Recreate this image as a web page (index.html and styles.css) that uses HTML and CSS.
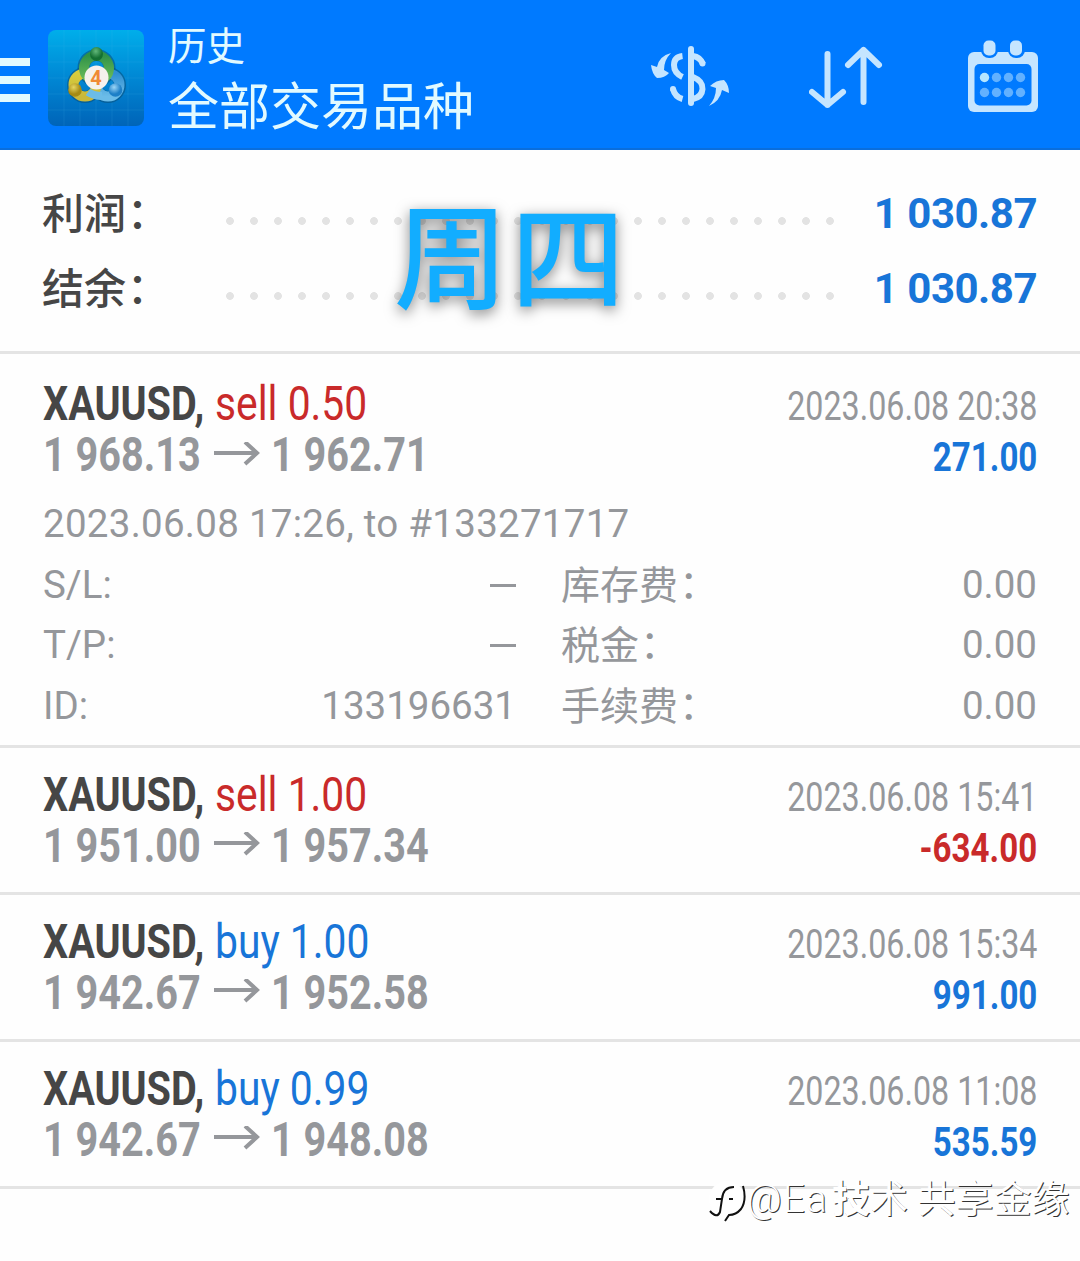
FILE: index.html
```html
<!DOCTYPE html>
<html lang="zh-CN">
<head>
<meta charset="UTF-8">
<meta name="viewport" content="width=device-width, initial-scale=1.0">
<title>历史</title>
<link rel="stylesheet" href="styles.css">
</head>
<body>

<div class="header">
    <div class="menu"><i></i><i></i><i></i></div>
    <svg class="logo" width="96" height="96" viewBox="0 0 96 96">
        <defs>
            <linearGradient id="bg" x1="0" y1="0" x2="0" y2="1"><stop offset="0" stop-color="#00aeea"/><stop offset=".5" stop-color="#0087d4"/><stop offset="1" stop-color="#0064b8"/></linearGradient>
            <linearGradient id="green" x1="0" y1="0" x2="0" y2="1"><stop offset="0" stop-color="#2f9248"/><stop offset="1" stop-color="#6dbd5a"/></linearGradient>
            <linearGradient id="gold" x1="0" y1="0" x2="0" y2="1"><stop offset="0" stop-color="#d6cc3c"/><stop offset="1" stop-color="#c9b83a"/></linearGradient>
            <linearGradient id="blue" x1="0" y1="0" x2="0" y2="1"><stop offset="0" stop-color="#2f8fd2"/><stop offset="1" stop-color="#6bbce8"/></linearGradient>
            <radialGradient id="gball" cx=".45" cy=".3"><stop offset="0" stop-color="#62b87a"/><stop offset="1" stop-color="#147032"/></radialGradient>
            <radialGradient id="yball" cx=".4" cy=".3"><stop offset="0" stop-color="#e6d660"/><stop offset="1" stop-color="#a58a14"/></radialGradient>
            <radialGradient id="bball" cx=".4" cy=".3"><stop offset="0" stop-color="#9cd6f6"/><stop offset="1" stop-color="#1d7fc7"/></radialGradient>
        </defs>
        <rect width="96" height="96" rx="8" fill="url(#bg)"/>
        <path d="M0 16H96M0 32H96M0 48H96M0 64H96M0 80H96M16 0V96M32 0V96M48 0V96M64 0V96M80 0V96" stroke="#4cc0ef" stroke-opacity=".13" fill="none"/>
        <g fill="none" stroke="#0a4f78" stroke-opacity=".55" stroke-width="12">
            <circle cx="48.500" cy="38" r="13"/>
            <circle cx="37" cy="55" r="12"/>
            <circle cx="60" cy="55" r="12"/>
        </g>
        <g fill="none" stroke-width="10">
            <circle cx="60" cy="55" r="11.500" stroke="url(#blue)"/>
            <circle cx="37" cy="55" r="11.500" stroke="url(#gold)"/>
            <circle cx="48.500" cy="38" r="12.500" stroke="url(#green)"/>
            <path d="M40 62Q46 66 54 66" stroke="#6bbce8" stroke-width="8"/>
        </g>
        <ellipse cx="48.500" cy="24" rx="6.500" ry="7" fill="url(#gball)"/>
        <circle cx="27" cy="60" r="6.800" fill="url(#yball)"/>
        <circle cx="67.500" cy="60" r="6.800" fill="url(#bball)"/>
        <circle cx="48.500" cy="47.500" r="12" fill="#f5f1ed"/>
        <text x="48" y="55" class="logo-num">4</text>
    </svg>
    <div class="titles">
        <div class="title">历史</div>
        <div class="subtitle">全部交易品种</div>
    </div>
    <svg class="icon-money" width="80" height="64" viewBox="0 0 80 64">
        <g fill="none" stroke="#c5e5ff" stroke-width="6">
            <path d="M40 6V60" stroke-linecap="round"/>
            <path d="M31.500 13Q23 14 23 22Q23 30 31.500 34"/>
            <path d="M42 13Q49 14 52 21M22 46Q24 54 31.500 56"/>
            <path d="M42 34Q52 38 51.500 46Q51 54 42 56"/>
        </g>
        <g fill="#c5e5ff">
            <circle cx="51.500" cy="20.500" r="3"/><circle cx="22" cy="46" r="3"/>
            <path d="M20 10Q8 13 6 24L0 22Q1 31 6 35Q14 35 18 30L13 27Q13 17 20 10Z"/>
            <path d="M58 63Q69 58 71 47L78 50Q78 42 73 37Q65 37 59 43L65 45Q65 55 58 63Z"/>
        </g>
    </svg>
    <svg class="icon-sort" width="74" height="66" viewBox="0 0 74 66">
        <path d="M18.500 9V60M3 47L18.500 60L34 47M54.500 57V5M39 20L54.500 5L70 20" fill="none" stroke="#c5e5ff" stroke-width="6" stroke-linecap="round" stroke-linejoin="round"/>
    </svg>
    <svg class="icon-cal" width="70" height="74" viewBox="0 0 70 74">
        <rect x="0" y="13" width="70" height="60" rx="6" fill="#c5e5ff"/>
        <rect x="6.500" y="25" width="57" height="41.500" rx="5" fill="#007aff"/>
        <rect x="13" y="-1" width="17" height="20" rx="8" fill="#007aff"/>
        <rect x="40" y="-1" width="17" height="20" rx="8" fill="#007aff"/>
        <rect x="15.500" y="1.500" width="12" height="15" rx="5" fill="#c5e5ff"/>
        <rect x="42" y="1.500" width="12" height="15" rx="5" fill="#c5e5ff"/>
        <circle cx="16.500" cy="38.500" r="4.700" fill="#b5e6ff"/>
        <g fill="#62b1ff">
            <circle cx="28.500" cy="38.500" r="4.700"/><circle cx="40.500" cy="38.500" r="4.700"/><circle cx="52.500" cy="38.500" r="4.700"/>
            <circle cx="16.500" cy="53.500" r="4.700"/><circle cx="28.500" cy="53.500" r="4.700"/><circle cx="40.500" cy="53.500" r="4.700"/><circle cx="52.500" cy="53.500" r="4.700"/>
        </g>
    </svg>
</div>

<div class="summary">
    <div class="sum-row"><span class="sum-label">利润<i>：</i></span><span class="dots"></span><span class="sum-value">1 030.87</span></div>
    <div class="sum-row"><span class="sum-label">结余<i>：</i></span><span class="dots"></span><span class="sum-value">1 030.87</span></div>
    <div class="day">周四</div>
</div>

<div class="deal open">
    <div class="line">
        <div class="name"><b>XAUUSD,</b><span class="sell">sell 0.50</span></div>
        <div class="date">2023.06.08 20:38</div>
    </div>
    <div class="line">
        <div class="price"><span>1 968.13</span><svg width="46" height="26" viewBox="0 0 46 26"><path d="M0 11H43M31 0L43 11L31 22" fill="none" stroke="#95979b" stroke-width="4"/></svg><span>1 962.71</span></div>
        <div class="profit">271.00</div>
    </div>
    <div class="details">
        <div class="order">2023.06.08 17:26, to #133271717</div>
        <div class="cell"><span>S/L:</span><i class="dash"></i></div>
        <div class="cell"><span class="fee">库存费<i>：</i></span><span>0.00</span></div>
        <div class="cell"><span>T/P:</span><i class="dash"></i></div>
        <div class="cell"><span class="fee">税金<i>：</i></span><span>0.00</span></div>
        <div class="cell"><span>ID:</span><span>133196631</span></div>
        <div class="cell"><span class="fee">手续费<i>：</i></span><span>0.00</span></div>
    </div>
</div>

<div class="deal">
    <div class="line">
        <div class="name"><b>XAUUSD,</b><span class="sell">sell 1.00</span></div>
        <div class="date">2023.06.08 15:41</div>
    </div>
    <div class="line">
        <div class="price"><span>1 951.00</span><svg width="46" height="26" viewBox="0 0 46 26"><path d="M0 11H43M31 0L43 11L31 22" fill="none" stroke="#95979b" stroke-width="4"/></svg><span>1 957.34</span></div>
        <div class="profit loss">-634.00</div>
    </div>
</div>

<div class="deal">
    <div class="line">
        <div class="name"><b>XAUUSD,</b><span class="buy">buy 1.00</span></div>
        <div class="date">2023.06.08 15:34</div>
    </div>
    <div class="line">
        <div class="price"><span>1 942.67</span><svg width="46" height="26" viewBox="0 0 46 26"><path d="M0 11H43M31 0L43 11L31 22" fill="none" stroke="#95979b" stroke-width="4"/></svg><span>1 952.58</span></div>
        <div class="profit">991.00</div>
    </div>
</div>

<div class="deal">
    <div class="line">
        <div class="name"><b>XAUUSD,</b><span class="buy">buy 0.99</span></div>
        <div class="date">2023.06.08 11:08</div>
    </div>
    <div class="line">
        <div class="price"><span>1 942.67</span><svg width="46" height="26" viewBox="0 0 46 26"><path d="M0 11H43M31 0L43 11L31 22" fill="none" stroke="#95979b" stroke-width="4"/></svg><span>1 948.08</span></div>
        <div class="profit">535.59</div>
    </div>
</div>

<div class="watermark">
    <svg width="38" height="52" viewBox="0 0 38 52">
        <ellipse cx="18" cy="26" rx="18" ry="18" fill="#fff"/>
        <path d="M1 38Q8 46 11 39L13 26Q14 14 25 14M7 26H13M20 26H24M34 13Q38 27 32 36Q27 42 20 42L16 48" fill="none" stroke="#111" stroke-width="2"/>
    </svg>
    <span class="at">@Ea</span><span><b>技</b>术 共享金缘</span>
</div>

</body>
</html>
```
FILE: styles.css
```css
body {
    margin: 0;
    height: 1261px;
    position: relative;
    overflow: hidden;
    background-color: #fefefe;
    font-family: Roboto, "Noto Sans CJK SC", sans-serif;
    color: #95979b;
}
.header {
    display: flex;
    height: 150px;
    box-sizing: border-box;
    border-bottom: 2px solid #0a6edc;
    background-color: #007aff;
    color: #e2faff;
}
.menu {
    display: flex;
    flex-direction: column;
    gap: 10px;
    width: 30px;
    padding-top: 58px;
    margin-right: 18px;
}
.menu i {
    height: 8px;
    background-color: #e2faff;
}
.logo {
    margin-top: 30px;
    margin-right: 24px;
}
.logo-num {
    font: bold 20px Roboto, sans-serif;
    fill: #f08a35;
    text-anchor: middle;
}
.titles {
    width: 480px;
    white-space: nowrap;
}
.title {
    font-size: 38.5px;
    line-height: 50px;
    padding-top: 22px;
}
.subtitle {
    font-size: 51px;
    line-height: 68px;
    padding-top: 2px;
}
.icon-money {
    margin-top: 43px;
    margin-left: 3px;
}
.icon-sort {
    margin-top: 45px;
    margin-left: 78px;
}
.icon-cal {
    margin-top: 39px;
    margin-left: 85px;
}
.summary {
    position: relative;
    height: 204px;
    padding: 26px 43px 0;
    box-sizing: border-box;
    border-bottom: 3px solid #e4e4e4;
}
.sum-row {
    display: flex;
    align-items: center;
    height: 75px;
}
.sum-label {
    width: 174px;
    margin-left: -1px;
    margin-right: 2px;
    margin-bottom: 6px;
    font-size: 42px;
    font-weight: 500;
    color: #464646;
}
.sum-label i, .fee i {
    display: inline-block;
    font-style: normal;
    transform: translate(1px, -1px);
}
.dots {
    width: 624px;
    height: 8px;
    margin-top: 15px;
    background: radial-gradient(circle at 12px 4px, #e3e3e3 3.5px, transparent 4.3px) 0 0 / 24px 8px repeat-x;
}
.sum-value {
    flex: 1;
    text-align: right;
    font-size: 42px;
    letter-spacing: -0.5px;
    font-weight: bold;
    color: #1875d8;
}
.day {
    position: absolute;
    left: 394px;
    top: 36px;
    font-size: 114px;
    line-height: 150px;
    font-weight: 500;
    letter-spacing: 3px;
    color: #12adff;
    text-shadow: 0 4px 14px rgba(0, 0, 0, 0.5);
    white-space: nowrap;
}
.deal {
    padding: 21px 43px;
    border-bottom: 3px solid #e4e4e4;
}
.deal.open {
    padding: 24px 43px 8px;
}
.line {
    display: flex;
    justify-content: space-between;
    align-items: baseline;
    height: 51px;
    line-height: 51px;
    white-space: nowrap;
}
.name, .price {
    display: flex;
    align-items: center;
    font-size: 48px;
}
.name b, .name span, .price span {
    transform: scaleX(0.825);
    transform-origin: left;
}
.name b {
    width: 172px;
    color: #464646;
}
.name span {
    transform: scaleX(0.85);
}
.name .sell {
    color: #c92a2a;
}
.name .buy {
    color: #1875d8;
}
.price {
    font-weight: bold;
}
.price span {
    width: 171px;
}
.price svg {
    margin-right: 11px;
}
.date {
    font-size: 40px;
    transform: scaleX(0.806);
    transform-origin: right;
}
.profit {
    font-size: 40px;
    font-weight: bold;
    color: #1875d8;
    transform: scaleX(0.827);
    transform-origin: right;
}
.profit.loss {
    color: #c92a2a;
}
.details {
    display: grid;
    grid-template-columns: 473px 1fr;
    grid-auto-rows: 60.7px;
    column-gap: 45px;
    margin-top: 14px;
    font-size: 38.5px;
    line-height: 60.7px;
}
.order {
    grid-column: 1 / 3;
    letter-spacing: 0.27px;
}
.cell {
    display: flex;
    justify-content: space-between;
    align-items: center;
}
.fee {
    padding-top: 2px;
    font-size: 39px;
}
.dash {
    width: 26px;
    height: 3px;
    background-color: #95979b;
}
.watermark {
    position: absolute;
    left: 709px;
    top: 1171px;
    display: flex;
    align-items: center;
    font-size: 38px;
    line-height: 56px;
    color: #fff;
    text-shadow: 1px 1px 0 #333;
    white-space: nowrap;
}
.at {
    width: 85px;
    letter-spacing: 1.5px;
    font-weight: 300;
}
```
